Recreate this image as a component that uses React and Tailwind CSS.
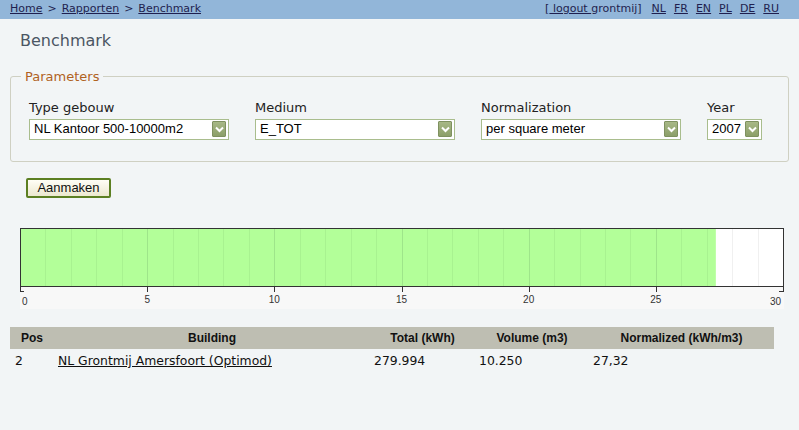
const verdana = "font-['DejaVu_Sans',Verdana,sans-serif]"
const arial = "font-['Liberation_Sans',Arial,sans-serif]"

function SelectBox({ value, width }) {
  return (
    <div
      className={`flex items-center justify-between h-[21px] border border-[#a9bd8d] bg-white pl-[4px] pr-[2px] ${arial} text-[13px] text-black`}
      style={{ width }}
    >
      <span>{value}</span>
      <span className="flex items-center justify-center w-[14px] h-[16px] bg-gradient-to-b from-[#a7b886] to-[#8c9f69] border border-[#7f9160] rounded-[1px]">
        <svg width="9" height="7" viewBox="0 0 9 7">
          <path d="M1 1.5 L4.5 5 L8 1.5" fill="none" stroke="#fff" strokeWidth="2" />
        </svg>
      </span>
    </div>
  )
}

function Chart() {
  const w = 763
  const value = 27.32
  const max = 30
  const unit = w / max
  const fillW = (value / max) * w
  const lines = Array.from({ length: 29 }, (_, i) => i + 1)
  const ticks = [0, 5, 10, 15, 20, 25, 30]
  return (
    <svg width="765" height="82" className="block">
      <rect x="0" y="59" width="764" height="22" fill="#f8f8f8" />
      <rect x="1" y="1" width={w - 1} height="57" fill="#ffffff" />
      <rect x="1" y="1" width={fillW} height="57" fill="#b3ff99" />
      {lines.map((i) => {
        const x = Math.round(i * unit) + 0.5
        const onGreen = x < fillW
        const major = i % 5 === 0
        const stroke = onGreen ? (major ? '#9ee58a' : '#a8f290') : major ? '#e6e6e6' : '#f0f0f0'
        return <line key={i} x1={x} x2={x} y1="1" y2="58" stroke={stroke} strokeWidth="1" />
      })}
      <rect x="0.5" y="0.5" width={w} height="58" fill="none" stroke="#333" strokeWidth="1" />
      {ticks.map((t) => {
        const x = Math.round(t * unit) + 0.5
        return <line key={t} x1={x} x2={x} y1="59" y2="64" stroke="#333" strokeWidth="1" />
      })}
      <line x1="0" x2="4" y1="63.5" y2="63.5" stroke="#333" />
      <line x1={w - 4} x2={w} y1="63.5" y2="63.5" stroke="#333" />
      {ticks.map((t) => {
        const x = t * unit
        const anchor = t === 0 ? 'start' : t === 30 ? 'end' : 'middle'
        const dx = t === 0 ? 2 : t === 30 ? -2 : 0
        return (
          <text
            key={t}
            x={x + dx}
            y={t === 0 || t === 30 ? 77 : 75}
            textAnchor={anchor}
            fontFamily="Liberation Sans, Arial, sans-serif"
            fontSize="10"
            fill="#333"
          >
            {t}
          </text>
        )
      })}
    </svg>
  )
}

export default function App() {
  return (
    <div className={`min-h-[430px] w-[799px] bg-[#f2f5f6] ${verdana}`}>
      <div className="flex items-center justify-between h-[19px] bg-[#92b6d9] px-[10px] text-[11px] text-[#1f1f4f]">
        <div className="flex gap-[5px]">
          <a className="underline">Home</a>
          <span>&gt;</span>
          <a className="underline">Rapporten</a>
          <span>&gt;</span>
          <a className="underline">Benchmark</a>
        </div>
        <div className="flex items-center gap-[8px] pr-[10px]">
          <span className="mr-[2px]">
            [<a className="underline"> logout </a>grontmij]
          </span>
          {['NL', 'FR', 'EN', 'PL', 'DE', 'RU'].map((l) => (
            <a key={l} className="underline">
              {l}
            </a>
          ))}
        </div>
      </div>

      <h1 className="pl-[20px] pt-[12px] text-[16px] leading-[19px] text-[#4b5663]">Benchmark</h1>

      <fieldset className="mx-[10px] mt-[17px] w-[779px] border border-[#cfd0c2] rounded-[3px] pl-[18px] pr-[18px] pt-[13px] pb-[21px]">
        <legend className="ml-[-8px] px-[4px] text-[13px] text-[#b0621f]">Parameters</legend>
        <div className="flex">
          {[
            { label: 'Type gebouw', value: 'NL Kantoor 500-10000m2', w: 200, next: 26 },
            { label: 'Medium', value: 'E_TOT', w: 200, next: 26 },
            { label: 'Normalization', value: 'per square meter', w: 200, next: 26 },
            { label: 'Year', value: '2007', w: 55, next: 0 },
          ].map((f) => (
            <div key={f.label} style={{ marginRight: f.next }}>
              <div className="text-[13px] leading-[16px] mb-[3px] text-[#222]">{f.label}</div>
              <SelectBox value={f.value} width={f.w} />
            </div>
          ))}
        </div>
      </fieldset>

      <div className="pl-[26px] pt-[13px]">
        <button
          className={`h-[20px] w-[85px] border-2 border-[#5c7f22] rounded-[2px] bg-gradient-to-b from-[#fffef6] to-[#ece8cf] ${arial} text-[13px] leading-[14px] text-[#111]`}
        >
          Aanmaken
        </button>
      </div>

      <div className="pl-[20px] pt-[29px]">
        <Chart />
      </div>

      <div className="mx-[10px] mt-[17px] w-[764px]">
        <div
          className={`grid grid-cols-[44px_316px_105px_114px_185px] h-[22px] items-center bg-[#bebeb2] ${arial} font-bold text-[12px] text-[#111]`}
        >
          <div className="text-center">Pos</div>
          <div className="text-center">Building</div>
          <div className="text-center">Total (kWh)</div>
          <div className="text-center">Volume (m3)</div>
          <div className="text-center">Normalized (kWh/m3)</div>
        </div>
        <div className="grid grid-cols-[44px_316px_105px_114px_185px] h-[26px] items-center text-[12.4px] text-[#111]">
          <div className="pl-[5px]">2</div>
          <div className="pl-[4px]">
            <a className="underline">NL Grontmij Amersfoort (Optimod)</a>
          </div>
          <div className="pl-[4px]">279.994</div>
          <div className="pl-[4px]">10.250</div>
          <div className="pl-[4px]">27,32</div>
        </div>
      </div>
    </div>
  )
}
